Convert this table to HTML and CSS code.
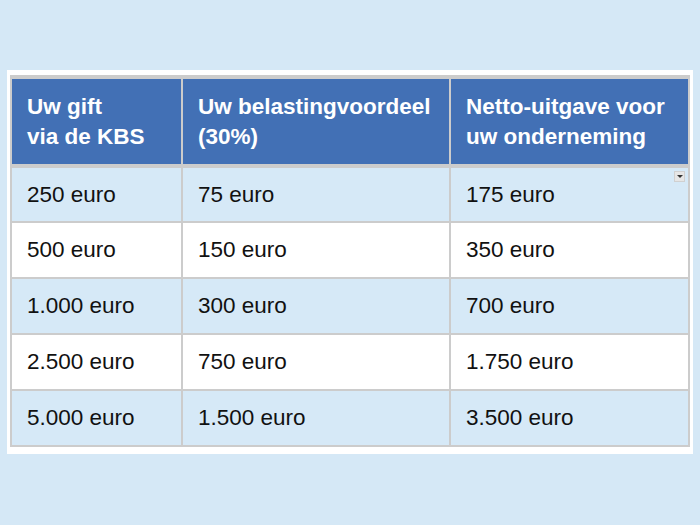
FILE: index.html
```html
<!DOCTYPE html>
<html>
<head>
<meta charset="utf-8">
<link rel="stylesheet" href="styles.css">
</head>
<body>
<div class="frame">
  <table class="gifts">
    <colgroup>
      <col class="c1">
      <col class="c2">
      <col class="c3">
    </colgroup>
    <thead>
      <tr>
        <th>Uw gift<br>via de KBS</th>
        <th>Uw belastingvoordeel<br>(30%)</th>
        <th>Netto-uitgave voor<br>uw onderneming</th>
      </tr>
    </thead>
    <tbody>
      <tr class="odd"><td>250 euro</td><td>75 euro</td><td class="has-menu">175 euro<span class="menu-btn"></span></td></tr>
      <tr><td>500 euro</td><td>150 euro</td><td>350 euro</td></tr>
      <tr class="odd"><td>1.000 euro</td><td>300 euro</td><td>700 euro</td></tr>
      <tr><td>2.500 euro</td><td>750 euro</td><td>1.750 euro</td></tr>
      <tr class="odd"><td>5.000 euro</td><td>1.500 euro</td><td>3.500 euro</td></tr>
    </tbody>
  </table>
</div>
</body>
</html>
```

FILE: styles.css
```css
html, body {
  margin: 0;
  padding: 0;
  background: #d5e8f6;
}
body {
  font-family: "Liberation Sans", Arial, sans-serif;
  padding-top: 70px;
  padding-left: 7px;
}
.frame {
  width: 686px;
  background: #ffffff;
  padding: 5px 5px 7px 3px;
  box-sizing: border-box;
}
.gifts {
  border-collapse: collapse;
  table-layout: fixed;
  width: 678px;
  border: 2px solid #cccccc;
}
.c1 { width: 171px; }
.c2 { width: 268px; }
.c3 { width: 239px; }
.gifts th,
.gifts td {
  border: 2px solid #cccccc;
  text-align: left;
  padding: 0 15px;
  font-size: 22.5px;
}
.gifts th {
  background: #4270b5;
  color: #ffffff;
  font-weight: bold;
  line-height: 30px;
  height: 89px;
  border-bottom-width: 4px;
  box-sizing: border-box;
  padding-top: 12px;
  padding-bottom: 12px;
}
.gifts td {
  height: 56px;
  color: #111111;
  line-height: 26px;
  box-sizing: border-box;
  background: #ffffff;
}
.gifts tr.odd td {
  background: #d6e9f7;
}
.gifts thead th { border-top-width: 4px; }
.has-menu {
  position: relative;
}
.menu-btn {
  position: absolute;
  top: 3px;
  right: 3px;
  width: 11px;
  height: 11px;
  background: #e6e6e6;
  border: 1px solid #d0d0d0;
  box-sizing: border-box;
}
.menu-btn::after {
  content: "";
  position: absolute;
  left: 2px;
  top: 3px;
  border-left: 3px solid transparent;
  border-right: 3px solid transparent;
  border-top: 3px solid #333333;
}
```
